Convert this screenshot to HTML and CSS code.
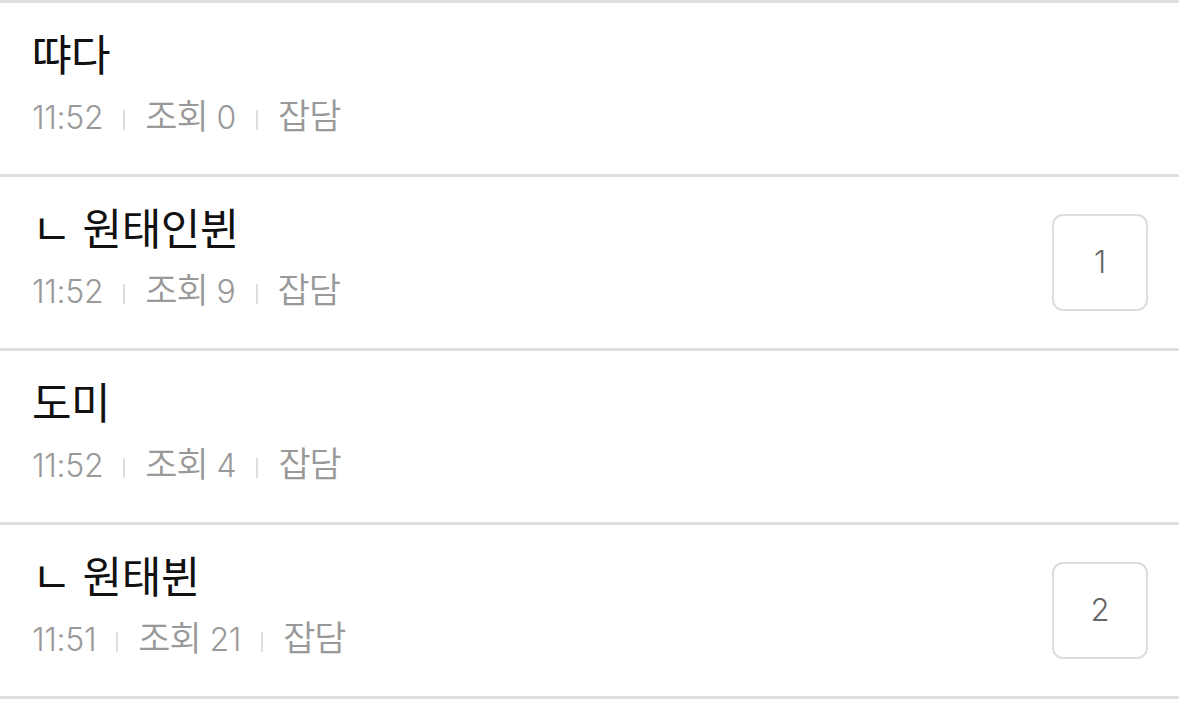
FILE: index.html
```html
<!DOCTYPE html>
<html lang="ko">
<head>
<meta charset="utf-8">
<link rel="stylesheet" href="styles.css">
</head>
<body>
<ul class="list">
  <li class="item">
    <div class="info">
      <div class="title">땨다</div>
      <div class="meta"><span class="num">11:52</span><i class="sep"></i><span>조회 <span class="num">0</span></span><i class="sep"></i><span>잡담</span></div>
    </div>
  </li>
  <li class="item">
    <div class="info">
      <div class="title">ㄴ 원태인뷘</div>
      <div class="meta"><span class="num">11:52</span><i class="sep"></i><span>조회 <span class="num">9</span></span><i class="sep"></i><span>잡담</span></div>
    </div>
    <div class="count">1</div>
  </li>
  <li class="item">
    <div class="info">
      <div class="title">도미</div>
      <div class="meta"><span class="num">11:52</span><i class="sep"></i><span>조회 <span class="num">4</span></span><i class="sep"></i><span>잡담</span></div>
    </div>
  </li>
  <li class="item">
    <div class="info">
      <div class="title">ㄴ 원태뷘</div>
      <div class="meta"><span class="num">11:51</span><i class="sep"></i><span>조회 <span class="num">21</span></span><i class="sep"></i><span>잡담</span></div>
    </div>
    <div class="count">2</div>
  </li>
</ul>
</body>
</html>
```
FILE: styles.css
```css
html, body {
  margin: 0;
  padding: 0;
  background: #fff;
}
body {
  font-family: "Noto Sans CJK KR", "Noto Sans", sans-serif;
  width: 1179px;
  height: 705px;
  overflow: hidden;
}
.list {
  list-style: none;
  margin: 0;
  padding: 0;
  border-top: 3px solid #e0e0e0;
}
.item {
  height: 171px;
  border-bottom: 3px solid #e0e0e0;
  display: flex;
  align-items: center;
  padding: 0 31px 0 32px;
  box-sizing: content-box;
}
.info {
  flex: 1;
  display: flex;
  flex-direction: column;
  gap: 14px;
  margin-bottom: 16px;
}
.title {
  font-size: 43px;
  line-height: 56px;
  color: #111;
  letter-spacing: -0.5px;
}
.meta {
  font-size: 35px;
  font-weight: 350;
  line-height: 40px;
  color: #999;
  display: flex;
  align-items: baseline;
  gap: 20px;
  letter-spacing: -1px;
}
.num {
  font-family: Inter, "Noto Sans CJK KR", sans-serif;
  font-size: 32px;
  font-weight: 300;
  letter-spacing: -0.3px;
}
.sep {
  display: inline-block;
  align-self: center;
  width: 2px;
  height: 20px;
  background: #dedede;
  margin-top: 8px;
}
.count {
  width: 92px;
  height: 91px;
  border: 2px solid #dcdcdc;
  border-radius: 11px;
  display: flex;
  align-items: center;
  justify-content: center;
  font-family: Inter, "Noto Sans CJK KR", sans-serif;
  font-size: 31px;
  font-weight: 300;
  color: #666;
  padding-bottom: 2px;
  box-sizing: content-box;
}
```
